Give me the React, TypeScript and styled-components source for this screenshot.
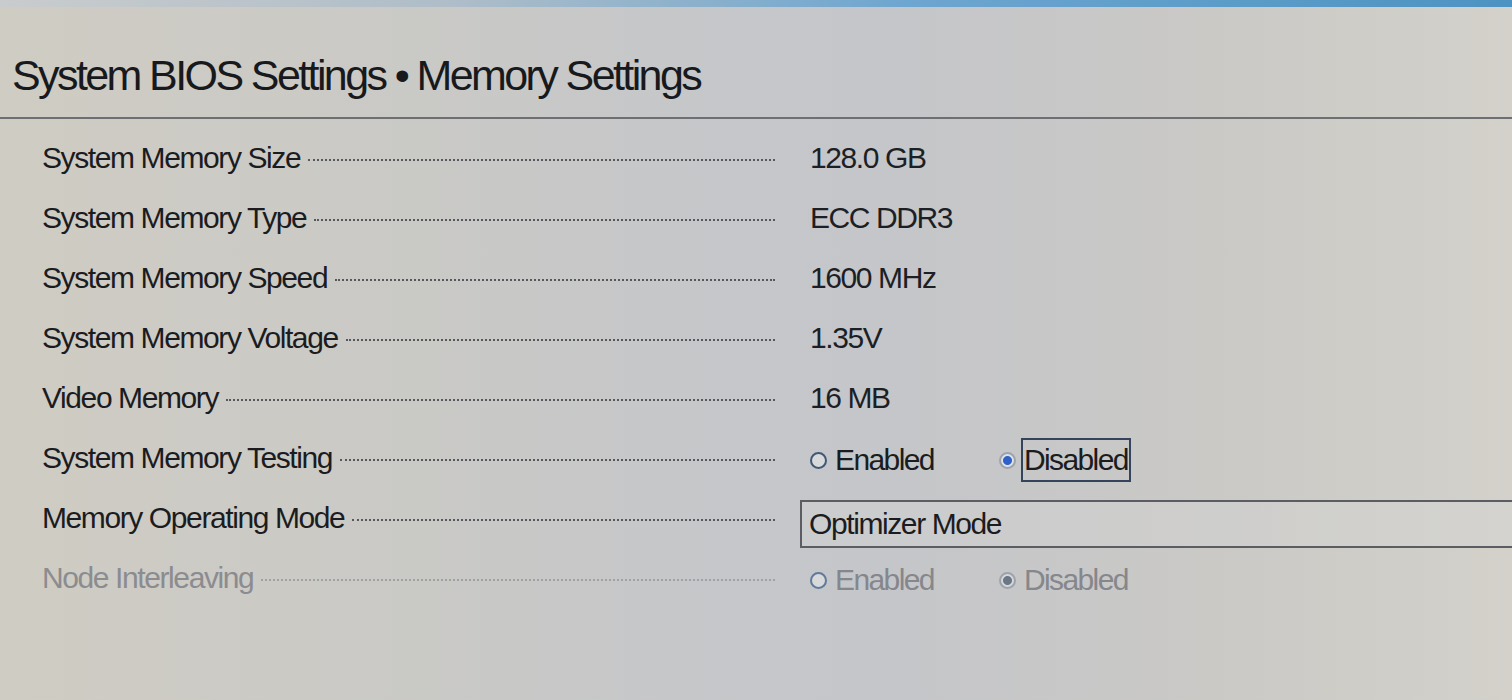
import React from "react";
import styled, { createGlobalStyle } from "styled-components";

const Global = createGlobalStyle`
  html, body { margin: 0; padding: 0; }
  body {
    width: 1512px;
    height: 700px;
    overflow: hidden;
    font-family: "Liberation Sans", Arial, sans-serif;
  }
`;

const Screen = styled.div`
  width: 1512px;
  height: 700px;
  overflow: hidden;
  background: linear-gradient(
    90deg,
    #cfccc3 0%,
    #cbcac5 20%,
    #c6c7c9 45%,
    #c5c6c9 60%,
    #cac9c6 80%,
    #d3d1ca 100%
  );
  display: flex;
  flex-direction: column;
`;

const TopStrip = styled.div`
  height: 7px;
  background: linear-gradient(90deg, #c9cccd 0%, #aebdc8 30%, #6da6d0 60%, #4d93c2 100%);
`;

const Title = styled.h1`
  margin: 0;
  padding: 40px 0 0 12px;
  height: 64px;
  box-sizing: content-box;
  font-size: 43px;
  font-weight: 400;
  letter-spacing: -2.6px;
  color: #18191c;
  line-height: 56px;
  white-space: nowrap;
`;

const Rule = styled.div`
  height: 2px;
  margin-top: 6px;
  background: #6e6f72;
`;

const List = styled.div`
  display: flex;
  flex-direction: column;
  padding: 9px 0 0 42px;
`;

const Row = styled.div`
  display: grid;
  grid-template-columns: 733px 1fr;
  column-gap: 35px;
  align-items: center;
  height: 60px;
`;

const LabelCell = styled.div<{ $disabled?: boolean }>`
  display: flex;
  align-items: center;
  font-size: 30px;
  letter-spacing: -1.4px;
  color: ${(p) => (p.$disabled ? "#8b8c8f" : "#1b1c1f")};
  white-space: nowrap;
`;

const Leader = styled.span<{ $disabled?: boolean }>`
  flex: 1;
  height: 0;
  margin: 4px 0 0 8px;
  border-bottom: 2px dotted ${(p) => (p.$disabled ? "#a0a1a4" : "#55575b")};
`;

const Value = styled.div`
  font-size: 30px;
  letter-spacing: -1.4px;
  color: #1c1f25;
  white-space: nowrap;
`;

const RadioGroup = styled.div`
  display: flex;
  align-items: center;
  gap: 62px;
  margin-top: 4px;
`;

const RadioOption = styled.div<{ $disabled?: boolean }>`
  display: flex;
  align-items: center;
  gap: 5px;
  font-size: 30px;
  letter-spacing: -1.6px;
  color: ${(p) => (p.$disabled ? "#85878c" : "#1b1c20")};
  white-space: nowrap;
`;

const RadioMark = styled.span<{ $checked?: boolean; $disabled?: boolean }>`
  width: 17px;
  height: 17px;
  box-sizing: border-box;
  border-radius: 50%;
  border: 2px solid
    ${(p) => (p.$checked ? "#9ea3ab" : p.$disabled ? "#5f7a9c" : "#3f5875")};
  background: ${(p) =>
    p.$checked
      ? p.$disabled
        ? "radial-gradient(circle, #6b7686 0 4px, #d5d7da 5px)"
        : "radial-gradient(circle, #2f62c8 0 4px, #dde2ea 5px)"
      : "#d8d9db"};
  flex-shrink: 0;
`;

const RadioText = styled.span<{ $focused?: boolean }>`
  padding: ${(p) => (p.$focused ? "4px 1px" : "6px 3px")};
  border: ${(p) => (p.$focused ? "2px solid #33445c" : "none")};
  line-height: 32px;
`;

const Dropdown = styled.div`
  height: 48px;
  box-sizing: border-box;
  margin-left: -10px;
  margin-top: 12px;
  border: 2px solid #5b5d62;
  border-right: none;
  display: flex;
  align-items: center;
  padding-left: 7px;
  font-size: 30px;
  letter-spacing: -1.4px;
  color: #1b1c20;
  background: rgba(214, 214, 214, 0.35);
`;

type Item =
  | { label: string; kind: "value"; value: string }
  | { label: string; kind: "radio"; selected: "Enabled" | "Disabled"; focused?: boolean; disabled?: boolean }
  | { label: string; kind: "select"; value: string };

const items: Item[] = [
  { label: "System Memory Size", kind: "value", value: "128.0 GB" },
  { label: "System Memory Type", kind: "value", value: "ECC DDR3" },
  { label: "System Memory Speed", kind: "value", value: "1600 MHz" },
  { label: "System Memory Voltage", kind: "value", value: "1.35V" },
  { label: "Video Memory", kind: "value", value: "16 MB" },
  { label: "System Memory Testing", kind: "radio", selected: "Disabled", focused: true },
  { label: "Memory Operating Mode", kind: "select", value: "Optimizer Mode" },
  { label: "Node Interleaving", kind: "radio", selected: "Disabled", disabled: true },
];

export default function App() {
  return (
    <>
      <Global />
      <Screen>
        <TopStrip />
        <Title>System BIOS Settings • Memory Settings</Title>
        <Rule />
        <List>
          {items.map((it) => {
            const disabled = it.kind === "radio" && !!it.disabled;
            return (
              <Row key={it.label}>
                <LabelCell $disabled={disabled}>
                  {it.label}
                  <Leader $disabled={disabled} />
                </LabelCell>
                {it.kind === "value" && <Value>{it.value}</Value>}
                {it.kind === "select" && <Dropdown>{it.value}</Dropdown>}
                {it.kind === "radio" && (
                  <RadioGroup>
                    {(["Enabled", "Disabled"] as const).map((opt) => (
                      <RadioOption key={opt} $disabled={disabled}>
                        <RadioMark $checked={it.selected === opt} $disabled={disabled} />
                        <RadioText $focused={!!it.focused && it.selected === opt}>{opt}</RadioText>
                      </RadioOption>
                    ))}
                  </RadioGroup>
                )}
              </Row>
            );
          })}
        </List>
      </Screen>
    </>
  );
}
